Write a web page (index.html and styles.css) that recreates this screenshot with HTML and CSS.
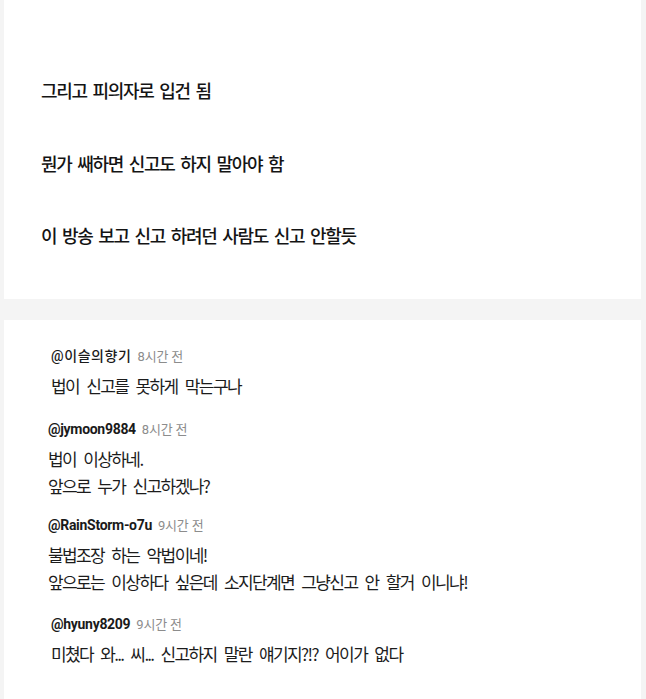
FILE: index.html
```html
<!DOCTYPE html>
<html lang="ko">
<head>
<meta charset="utf-8">
<title>신고</title>
<link rel="stylesheet" href="styles.css">
</head>
<body>
<div class="page">
  <section class="panel panel-post">
    <p class="post-line">그리고 피의자로 입건 됨</p>
    <p class="post-line">뭔가 쌔하면 신고도 하지 말아야 함</p>
    <p class="post-line">이 방송 보고 신고 하려던 사람도 신고 안할듯</p>
  </section>
  <section class="panel panel-comments">
    <div class="comment c1">
      <div class="comment-head"><span class="user user-ko">@이슬의향기</span><span class="time">8시간 전</span></div>
      <div class="comment-body">법이 신고를 못하게 막는구나</div>
    </div>
    <div class="comment c2">
      <div class="comment-head"><span class="user">@jymoon9884</span><span class="time">8시간 전</span></div>
      <div class="comment-body">법이 이상하네.<br>앞으로 누가 신고하겠나?</div>
    </div>
    <div class="comment c3">
      <div class="comment-head"><span class="user">@RainStorm-o7u</span><span class="time">9시간 전</span></div>
      <div class="comment-body">불법조장 하는 악법이네!<br>앞으로는 이상하다 싶은데 소지단계면 그냥신고 안 할거 이니냐!</div>
    </div>
    <div class="comment c4">
      <div class="comment-head"><span class="user">@hyuny8209</span><span class="time">9시간 전</span></div>
      <div class="comment-body">미쳤다 와<span class="dots">...</span> 씨<span class="dots">...</span> 신고하지 말란 얘기지?!? 어이가 없다</div>
    </div>
  </section>
</div>
</body>
</html>
```

FILE: styles.css
```css
html, body {
  margin: 0;
  padding: 0;
  background: #f4f4f4;
}

body {
  font-family: Roboto, "Noto Sans CJK KR", sans-serif;
  color: #161616;
}

.page {
  width: 646px;
  height: 699px;
  overflow: hidden;
  display: flex;
  flex-direction: column;
  gap: 21px;
  padding: 0 5px 0 4px;
  box-sizing: border-box;
}

.panel {
  background: #ffffff;
}

.panel-post {
  height: 299px;
  box-sizing: border-box;
  padding: 78px 0 0 37px;
  display: flex;
  flex-direction: column;
  gap: 48.5px;
}

.post-line {
  margin: 0;
  font-family: "Noto Sans CJK KR", sans-serif;
  font-size: 18px;
  font-weight: 500;
  line-height: 24px;
  letter-spacing: -1.3px;
  word-spacing: 2px;
  color: #141414;
}

.panel-comments {
  flex: 1;
  padding-top: 26px;
}

.comment-head {
  line-height: 20px;
  margin-bottom: 5px;
  white-space: nowrap;
}

.user {
  font-size: 14px;
  font-weight: 700;
  letter-spacing: -0.3px;
  color: #1a1a1a;
}

.user-ko {
  font-weight: 500;
  letter-spacing: 0.6px;
}

.time {
  margin-left: 6px;
  font-family: Roboto, "Noto Sans CJK KR", sans-serif;
  font-size: 13px;
  color: #8c8c8c;
  letter-spacing: -0.2px;
}

.comment-body {
  font-family: "Noto Sans CJK KR", sans-serif;
  font-size: 17px;
  line-height: 27px;
  letter-spacing: -1.6px;
  word-spacing: 4px;
  color: #1c1c1c;
  white-space: nowrap;
}

.dots {
  letter-spacing: -1.8px;
}

.c1 { padding-left: 47px; }
.c2 { padding-left: 44px; margin-top: 20px; }
.c3 { padding-left: 44px; margin-top: 16px; }
.c4 { padding-left: 47px; margin-top: 19px; }
```
